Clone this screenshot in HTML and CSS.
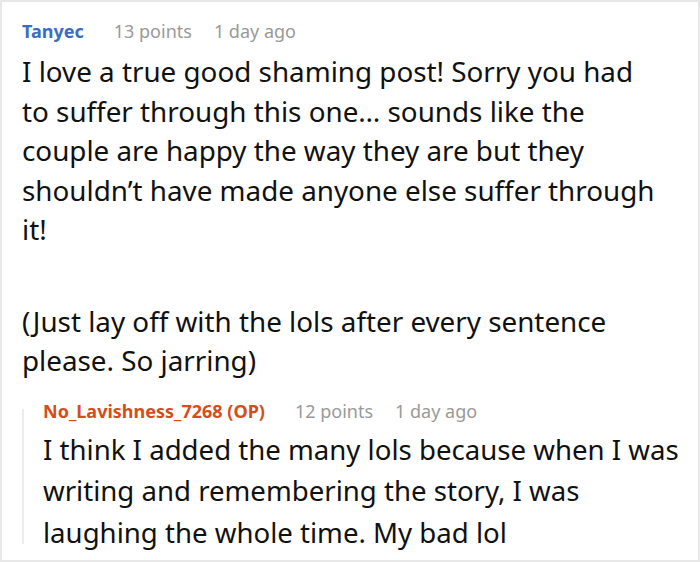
FILE: index.html
```html
<!DOCTYPE html>
<html>
<head>
<meta charset="utf-8">
<link rel="stylesheet" href="styles.css">
</head>
<body>
<div class="card">
  <div class="meta">
    <span class="author">Tanyec</span>
    <span class="info">13 points</span>
    <span class="info">1 day ago</span>
  </div>
  <p class="text first">I love a true good shaming post! Sorry you had to suffer through this one… sounds like the couple are happy the way they are but they shouldn’t have made anyone else suffer through it!</p>
  <p class="text gap">(Just lay off with the lols after every sentence please. So jarring)</p>
  <div class="reply">
    <div class="meta">
      <span class="author op">No_Lavishness_7268 (OP)</span>
      <span class="info">12 points</span>
      <span class="info">1 day ago</span>
    </div>
    <p class="text">I think I added the many lols because when I was writing and remembering the story, I was laughing the whole time. My bad lol</p>
  </div>
</div>
</body>
</html>
```

FILE: styles.css
```css
html, body {
  margin: 0;
  padding: 0;
  background: #fff;
}
body {
  font-family: "Noto Sans", "Open Sans", sans-serif;
  color: #111;
}
.card {
  width: 700px;
  height: 562px;
  box-sizing: border-box;
  border: 2px solid #e8e8e8;
  padding: 14px 6px 0 20px;
}
.meta {
  display: flex;
  gap: 22px;
  font-size: 18px;
  line-height: 30px;
}
.author {
  color: #3a6dc2;
  font-weight: 700;
  margin-right: 8px;
}
.info {
  color: #999;
}
.text {
  margin: 0;
  max-width: 642px;
  font-size: 27.8px;
  line-height: 39.5px;
}
.first {
  margin-top: 6px;
}
.gap {
  margin-top: 52px;
}
.reply {
  position: relative;
  margin-top: 17px;
  padding-left: 21px;
}
.reply::before {
  content: "";
  position: absolute;
  left: 0;
  top: 11px;
  bottom: 9px;
  width: 2px;
  background: #ececec;
}
.reply .meta {
  line-height: 26px;
}
.reply .author.op {
  color: #d64d1a;
}
.reply .text {
  max-width: none;
  font-size: 27.6px;
  line-height: 41.5px;
  margin-top: 5px;
}
```
